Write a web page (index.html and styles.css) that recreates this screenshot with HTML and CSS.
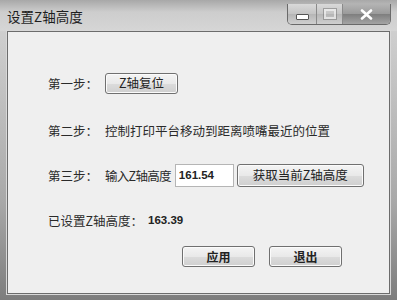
FILE: index.html
```html
<!DOCTYPE html>
<html lang="zh-CN">
<head>
<meta charset="UTF-8" />
<title>设置Z轴高度</title>
<link rel="stylesheet" href="styles.css">
</head>
<body>

<div class="window">
  <div class="titlebar">
    <span class="title">设置Z轴高度</span>
    <div class="caption-buttons">
      <span class="cap cap-min"><i></i></span>
      <span class="cap cap-max"><i></i></span>
      <span class="cap cap-close">
        <svg width="13" height="11" viewBox="0 0 13 11"><path d="M2 1.5 L11 9.5 M11 1.5 L2 9.5" stroke="#fff" stroke-width="2.6" stroke-linecap="round"/></svg>
      </span>
    </div>
  </div>

  <div class="client">
    <div class="row row1">
      <span class="label">第一步：</span>
      <button class="btn btn-reset">Z轴复位</button>
    </div>

    <div class="row row2">
      <span class="label">第二步：</span>
      <span class="text">控制打印平台移动到距离喷嘴最近的位置</span>
    </div>

    <div class="row row3">
      <span class="label">第三步：</span>
      <span class="text text-tight">输入Z轴高度</span>
      <input class="num" type="text" value="161.54" />
      <button class="btn btn-get">获取当前Z轴高度</button>
    </div>

    <div class="row row4">
      <span class="label label-wide">已设置Z轴高度：</span>
      <span class="value">163.39</span>
    </div>

    <div class="actions">
      <button class="btn btn-bold">应用</button>
      <button class="btn btn-bold">退出</button>
    </div>
  </div>
</div>

</body>
</html>
```

FILE: styles.css
```css
body { margin: 0; background: #6e6e6e; font-family: "Noto Sans CJK SC", "Noto Sans", sans-serif; color: #2a2a2a; }

.window { width: 397px; height: 300px; box-sizing: border-box; background: linear-gradient(#bdbdbd, #cfcfcf 30px, #a9a9a9 200px, #7d7d7d); display: flex; flex-direction: column; }

.titlebar { height: 31px; display: flex; align-items: flex-start; justify-content: space-between; background: linear-gradient(#a8a8a8, #cdcdcd 12px, #d6d6d6); }
.title { font-size: 13.5px; color: #1e1e1e; margin: 8px 0 0 7px; line-height: 16px; }

.caption-buttons { display: flex; margin: 4px 6px 0 0; height: 20px; border: 1px solid #6a6a6a; border-top: none; border-radius: 0 0 5px 5px; overflow: hidden; }
.cap { display: flex; align-items: center; justify-content: center; height: 20px; background: linear-gradient(#d9d9d9, #c4c4c4 50%, #b6b6b6 51%, #cfcfcf); border-right: 1px solid #8a8a8a; }
.cap-min { width: 28px; }
.cap-max { width: 25px; }
.cap-close { width: 47px; border-right: none; background: linear-gradient(#b4b4b4, #9a9a9a 50%, #7e7e7e 51%, #a4a4a4); }
.cap-min i { width: 11px; height: 4px; margin-top: 6px; background: #fff; border: 1px solid #555; border-radius: 1px; }
.cap-max i { width: 8px; height: 6px; border: 2px solid #fff; outline: 1px solid #777; opacity: 0.55; }

.client { margin: 0 7px 6px 7px; flex: 1; background: #efefef; border: 1px solid #6c6c6c; box-shadow: 0 0 0 1px #d8d8d8; }

.row { display: flex; align-items: center; height: 22px; padding-left: 40px; font-size: 12.5px; }
.row1 { margin-top: 40px; }
.row2 { margin-top: 25px; }
.row3 { margin-top: 23px; }
.row4 { margin-top: 23px; }

.label { width: 57px; flex-shrink: 0; }
.label-wide { width: 100px; }
.text { white-space: nowrap; }
.text-tight { letter-spacing: -0.7px; }
.value { font-family: "Liberation Sans", Arial, sans-serif; font-weight: bold; font-size: 11.5px; color: #222; }

.btn { font-family: "Noto Sans CJK SC", "Noto Sans", sans-serif; font-size: 12.5px; color: #222; padding: 0; border: 1px solid #707070; border-radius: 3px; background: linear-gradient(#f4f4f4, #e9e9e9 50%, #dcdcdc 51%, #cfcfcf); box-shadow: inset 0 0 0 1px #fbfbfb; line-height: 18px; }
.btn-reset { width: 73px; height: 21px; }
.btn-get { width: 127px; height: 23px; margin-left: 3px; }
.btn-bold { width: 73px; height: 21px; font-weight: bold; font-size: 12px; }

.num { width: 59px; height: 23px; box-sizing: border-box; margin-left: 4px; border: 1px solid #b5b5b5; background: #fff; padding: 0 3px; font-family: "Liberation Sans", Arial, sans-serif; font-weight: bold; font-size: 11.5px; color: #222; outline: none; }

.actions { display: flex; gap: 14px; padding-left: 174px; margin-top: 15px; }
```
